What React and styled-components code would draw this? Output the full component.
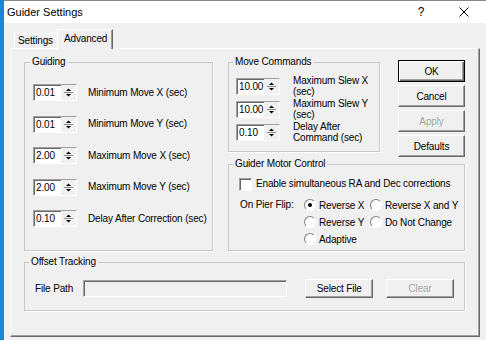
import React from 'react'
import styled, {createGlobalStyle, css} from 'styled-components'

const Global = createGlobalStyle`
    html, body {
        margin: 0;
        padding: 0;
        background: #f0f0f0;
    }
    body {
        font-family: "Liberation Sans", Arial, sans-serif;
        font-size: 10px;
        letter-spacing: -0.15px;
        color: #000;
    }
`

const Window = styled.div`
    width: 486px;
    height: 340px;
    box-sizing: border-box;
    display: flex;
    flex-direction: column;
    border-left: 4px solid #1a86d6;
    background: #f0f0f0;
    overflow: hidden;
`

const TitleBar = styled.div`
    height: 23px;
    flex: none;
    box-sizing: border-box;
    display: flex;
    align-items: center;
    background: #fff;
    border-top: 1px solid #8a8a8a;
    padding-left: 3px;
`

const Title = styled.div`
    flex: 1;
    font-size: 11px;
    letter-spacing: 0;
`

const TitleButton = styled.div`
    width: ${p => p.$w}px;
    height: 100%;
    display: flex;
    align-items: center;
    justify-content: center;
    font-size: 12px;
`

const Body = styled.div`
    flex: 1;
    display: flex;
    flex-direction: column;
    padding: 6px 6px 3px 6px;
`

const TabStrip = styled.div`
    display: flex;
    align-items: flex-end;
    height: 19px;
    padding-left: 4px;
    flex: none;
`

const Tab = styled.div`
    box-sizing: border-box;
    height: ${p => p.$active ? 20 : 15}px;
    width: ${p => p.$w}px;
    margin-bottom: ${p => p.$active ? -1 : 0}px;
    position: relative;
    z-index: ${p => p.$active ? 1 : 0};
    background: #f0f0f0;
    border-top: 1px solid #fff;
    border-left: 1px solid #fff;
    border-right: ${p => p.$active ? '1px solid #696969' : 'none'};
    box-shadow: ${p => p.$active ? 'inset -1px 0 0 #a0a0a0' : 'none'};
    padding: ${p => p.$active ? '3px 0 0 6px' : '1px 0 0 3px'};
    line-height: 12px;
`

const Panel = styled.div`
    flex: 1;
    box-sizing: border-box;
    border: 1px solid;
    border-color: #fff #696969 #696969 #fff;
    box-shadow: inset -1px -1px 0 #a0a0a0;
    padding: 7px 14px 0 13px;
`

const Layout = styled.div`
    display: grid;
    grid-template-columns: 189px 152px 70px;
    grid-template-rows: 102px 93px;
    column-gap: 15px;
`

const Group = styled.fieldset`
    margin: 0;
    min-width: 0;
    box-sizing: border-box;
    border: 1px solid #c8c8c8;
    box-shadow: 1px 1px 0 #fff;
    padding: ${p => p.$pad};
    height: ${p => p.$h ? p.$h + 'px' : 'auto'};
    grid-column: ${p => p.$col || 'auto'};
    grid-row: ${p => p.$row || 'auto'};
    align-self: ${p => p.$align || 'stretch'};
`

const Legend = styled.legend`
    padding: 0 2px;
    margin-left: ${p => p.$shift}px;
    line-height: 12px;
`

const FieldRows = styled.div`
    display: flex;
    flex-direction: column;
    gap: ${p => p.$gap}px;
`

const FieldRow = styled.div`
    display: flex;
    align-items: center;
    gap: ${p => p.$gap}px;
`

const SpinBox = styled.div`
    display: flex;
    flex: none;
    width: 44px;
    height: 17px;
    box-sizing: border-box;
    border: 1px solid;
    border-color: #a0a0a0 #fff #fff #a0a0a0;
    box-shadow: inset 1px 1px 0 #696969;
    background: #fff;
`

const SpinValue = styled.div`
    flex: 1;
    padding: 2px 0 0 2px;
    line-height: 12px;
`

const SpinArrows = styled.svg`
    flex: none;
    width: 15px;
    height: 15px;
    background: #f0f0f0;
`

const Label = styled.div`
    line-height: ${p => p.$lh || 12}px;
    white-space: nowrap;
`

const ButtonStack = styled.div`
    grid-column: 3;
    grid-row: 1;
    justify-self: end;
    display: flex;
    flex-direction: column;
    gap: 3px;
    padding-top: 4px;
`

const Button = styled.button`
    box-sizing: border-box;
    width: ${p => p.$w || 67}px;
    height: ${p => p.$h || 22}px;
    font: 10px "Liberation Sans", Arial, sans-serif;
    letter-spacing: -0.15px;
    background: #f0f0f0;
    padding: 0;
    margin: 0;
    border: 1px solid;
    border-color: #fff #696969 #696969 #fff;
    box-shadow: inset -1px -1px 0 #a0a0a0;
    color: #000;
    &:disabled {
        color: #a0a0a0;
        text-shadow: 1px 1px 0 #fff;
    }
    ${p => p.$default && css`
        border-color: #000;
        box-shadow: inset 1px 1px 0 #fff, inset -1px -1px 0 #696969, inset -2px -2px 0 #a0a0a0;
    `}
`

const CheckRow = styled.div`
    display: flex;
    align-items: center;
    gap: 4px;
    height: 13px;
`

const CheckBox = styled.span`
    width: 13px;
    height: 13px;
    box-sizing: border-box;
    border: 1px solid;
    border-color: #a0a0a0 #fff #fff #a0a0a0;
    box-shadow: inset 1px 1px 0 #696969;
    background: #fff;
`

const FlipGrid = styled.div`
    display: grid;
    grid-template-columns: 64px 66px auto;
    grid-auto-rows: 13px;
    row-gap: 4px;
    margin-top: 8px;
    padding-left: 1px;
    align-items: center;
`

const Radio = styled.div`
    display: flex;
    align-items: center;
    gap: 3px;
    grid-column: ${p => p.$col};
    white-space: nowrap;
`

const RadioCircle = styled.span`
    width: 12px;
    height: 12px;
    border-radius: 50%;
    box-sizing: border-box;
    border: 1px solid;
    border-color: #808080 #fff #fff #808080;
    background: #fff;
    display: inline-flex;
    align-items: center;
    justify-content: center;
    &::after {
        content: '';
        width: 4px;
        height: 4px;
        border-radius: 50%;
        background: ${p => p.$on ? '#000' : 'transparent'};
    }
`

const FileRow = styled.div`
    display: flex;
    align-items: center;
    height: 19px;
`

const TextField = styled.div`
    width: 205px;
    height: 17px;
    box-sizing: border-box;
    border: 1px solid;
    border-color: #a0a0a0 #fff #fff #a0a0a0;
    box-shadow: inset 1px 1px 0 #696969;
    background: #f0f0f0;
    margin-right: 18px;
`

const Spin = ({value}) => (
    <SpinBox>
        <SpinValue>{value}</SpinValue>
        <SpinArrows viewBox="0 0 15 15">
            <path d="M5 6h5L7.5 3.5z" fill="#000"/>
            <path d="M3 7.5h9" stroke="#8a8a8a" strokeWidth="1"/>
            <path d="M5 9h5L7.5 11.5z" fill="#000"/>
        </SpinArrows>
    </SpinBox>
)

const guiding = [
    ['0.01', 'Minimum Move X (sec)'],
    ['0.01', 'Minimum Move Y (sec)'],
    ['2.00', 'Maximum Move X (sec)'],
    ['2.00', 'Maximum Move Y (sec)'],
    ['0.10', 'Delay After Correction (sec)'],
]

const moves = [
    ['10.00', 'Maximum Slew X', '(sec)'],
    ['10.00', 'Maximum Slew Y', '(sec)'],
    ['0.10', 'Delay After', 'Command (sec)'],
]

const App = () => (
    <Window>
        <Global/>
        <TitleBar>
            <Title>Guider Settings</Title>
            <TitleButton $w={42}>?</TitleButton>
            <TitleButton $w={44}>
                <svg width="10" height="10" viewBox="0 0 10 10">
                    <path d="M0.5 0.5L9.5 9.5M9.5 0.5L0.5 9.5" stroke="#000" strokeWidth="1"/>
                </svg>
            </TitleButton>
        </TitleBar>
        <Body>
            <TabStrip>
                <Tab $w={43}>Settings</Tab>
                <Tab $w={56} $active>Advanced</Tab>
            </TabStrip>
            <Panel>
                <Layout>
                    <Group $pad="16px 8px 0 8px" $row="1 / span 2">
                        <Legend $shift={-3}>Guiding</Legend>
                        <FieldRows $gap={14.5}>
                            {guiding.map(([v, l]) => (
                                <FieldRow key={l} $gap={11}>
                                    <Spin value={v}/>
                                    <Label>{l}</Label>
                                </FieldRow>
                            ))}
                        </FieldRows>
                    </Group>
                    <Group $pad="6.5px 7px 0 7px" $h={96} $col="2" $row="1" $align="start">
                        <Legend $shift={-3}>Move Commands</Legend>
                        <FieldRows $gap={0}>
                            {moves.map(([v, a, b]) => (
                                <FieldRow key={a} $gap={13}>
                                    <Spin value={v}/>
                                    <Label $lh={11.5}>{a}<br/>{b}</Label>
                                </FieldRow>
                            ))}
                        </FieldRows>
                    </Group>
                    <ButtonStack>
                        <Button $default>OK</Button>
                        <Button>Cancel</Button>
                        <Button disabled>Apply</Button>
                        <Button>Defaults</Button>
                    </ButtonStack>
                    <Group $pad="7.5px 8px 0 10px" $col="2 / span 2" $row="2">
                        <Legend $shift={-6}>Guider Motor Control</Legend>
                        <CheckRow>
                            <CheckBox/>
                            <Label>Enable simultaneous RA and Dec corrections</Label>
                        </CheckRow>
                        <FlipGrid>
                            <Label>On Pier Flip:</Label>
                            <Radio $col={2}><RadioCircle $on/>Reverse X</Radio>
                            <Radio $col={3}><RadioCircle/>Reverse X and Y</Radio>
                            <Radio $col={2}><RadioCircle/>Reverse Y</Radio>
                            <Radio $col={3}><RadioCircle/>Do Not Change</Radio>
                            <Radio $col={2}><RadioCircle/>Adaptive</Radio>
                        </FlipGrid>
                    </Group>
                </Layout>
                <Group $pad="11px 10px 0 10px" $h={55} style={{marginTop: 5}}>
                    <Legend $shift={-6}>Offset Tracking</Legend>
                    <FileRow>
                        <Label style={{width: 48}}>File Path</Label>
                        <TextField/>
                        <Button $w={68} $h={19}>Select File</Button>
                        <Button $w={68} $h={19} disabled style={{marginLeft: 13}}>Clear</Button>
                    </FileRow>
                </Group>
            </Panel>
        </Body>
    </Window>
)

export default App
